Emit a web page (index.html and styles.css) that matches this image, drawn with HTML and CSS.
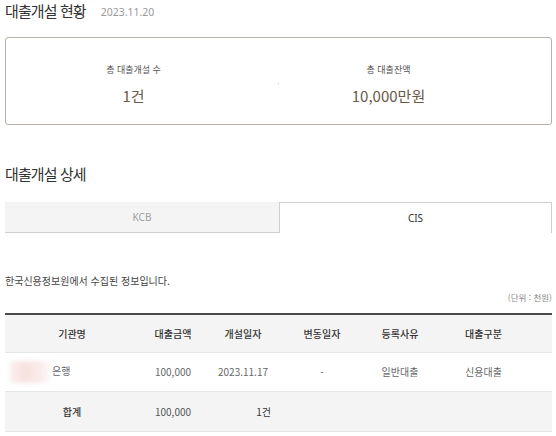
FILE: index.html
```html
<!DOCTYPE html>
<html lang="ko">
<head>
<meta charset="utf-8">
<link rel="stylesheet" href="styles.css">
</head>
<body>
<div class="page">
  <div class="head">
    <h2 class="title">대출개설 현황</h2>
    <span class="date">2023.11.20</span>
  </div>
  <div class="summary">
    <div class="sum-item">
      <div class="sum-label">총 대출개설 수</div>
      <div class="sum-value">1건</div>
    </div>
    <div class="sum-item">
      <div class="sum-label">총 대출잔액</div>
      <div class="sum-value">10,000만원</div>
    </div>
  </div>

  <h2 class="title sub">대출개설 상세</h2>
  <div class="tabs">
    <div class="tab">KCB</div>
    <div class="tab active">CIS</div>
  </div>

  <p class="notice">한국신용정보원에서 수집된 정보입니다.</p>
  <p class="unit">(단위 : 천원)</p>

  <table class="grid">
    <colgroup>
      <col class="c1"><col class="c2"><col class="c3"><col class="c4"><col class="c5"><col class="c6">
    </colgroup>
    <thead>
      <tr><th>기관명</th><th>대출금액</th><th>개설일자</th><th>변동일자</th><th>등록사유</th><th class="last">대출구분</th></tr>
    </thead>
    <tbody>
      <tr class="row">
        <td class="org"><span class="blur"></span>은행</td>
        <td>100,000</td>
        <td>2023.11.17</td>
        <td>-</td>
        <td>일반대출</td>
        <td class="last">신용대출</td>
      </tr>
      <tr class="total">
        <td class="strong">합계</td>
        <td>100,000</td>
        <td class="right">1건</td>
        <td></td>
        <td></td>
        <td class="last"></td>
      </tr>
    </tbody>
  </table>
</div>
</body>
</html>
```
FILE: styles.css
```css
* { box-sizing: border-box; }
html, body { margin: 0; padding: 0; background: #fff; }
body {
  font-family: "Noto Sans CJK KR", "Noto Sans", sans-serif;
  color: #333;
}
.page { padding: 0 4px 0 5px; }

.head {
  display: flex;
  align-items: center;
  gap: 15px;
  height: 22px;
}
.title {
  margin: 0;
  font-size: 15px;
  font-weight: 400;
  line-height: 22px;
  letter-spacing: -0.9px;
  color: #333;
}
.date {
  font-family: "Noto Sans", sans-serif;
  font-size: 10.5px;
  color: #999;
  padding-top: 1px;
}

.summary {
  position: relative;
  margin-top: 15px;
  height: 88px;
  border: 1px solid #b7b1a8;
  border-radius: 3px;
  display: grid;
  grid-template-columns: 1fr 1fr;
  padding: 25px 35px 0 0;
  align-content: start;
}
.summary::after {
  content: "";
  position: absolute;
  left: 272px;
  top: 45px;
  width: 1px;
  height: 1px;
  background: #c8c8c8;
}
.sum-item { text-align: center; }
.sum-label {
  font-size: 9px;
  line-height: 14px;
  color: #555;
}
.sum-value {
  margin-top: 10px;
  font-size: 15px;
  line-height: 18px;
  font-weight: 400;
  color: #6a5a49;
}

.sub { margin-top: 38px; }

.tabs {
  margin-top: 17px;
  display: grid;
  grid-template-columns: 274px 1fr;
  height: 31px;
}
.tab {
  display: flex;
  align-items: center;
  justify-content: center;
  font-family: "Noto Sans", sans-serif;
  font-size: 10px;
  color: #a0a0a0;
  background: #f4f4f4;
  border-bottom: 1px solid #cfcfcf;
}
.tab.active {
  background: #fff;
  color: #333;
  border: 1px solid #cfcfcf;
  border-bottom: none;
}

.notice {
  margin: 41px 0 0;
  font-size: 10px;
  line-height: 14px;
  color: #444;
}
.unit {
  margin: 2px 0 0;
  text-align: right;
  font-size: 8.5px;
  line-height: 14px;
  color: #888;
}

.grid {
  margin-top: 9px;
  width: 100%;
  border-collapse: collapse;
  table-layout: fixed;
  font-size: 10px;
}
.c1 { width: 134px; }
.c2 { width: 68px; }
.c3 { width: 72px; }
.c4 { width: 86px; }
.c5 { width: 70px; }
.grid thead tr { border-top: 2px solid #4a4a4a; }
.grid th {
  height: 38px;
  background: #f4f4f4;
  font-weight: 500;
  color: #333;
  text-align: center;
  padding: 0;
}
.grid td {
  height: 39px;
  text-align: center;
  color: #666;
  padding: 0;
}
.grid .last { padding-right: 20px; }
.row td { border-top: 1px solid #e6e6e6; border-bottom: 1px solid #e6e6e6; background: #fff; }
.total td { height: 40px; background: #f4f4f4; color: #555; border-bottom: 1px solid #e6e6e6; }
.total .strong { font-weight: 500; color: #333; }
.total .right { text-align: right; padding-right: 8px; color: #333; }
.grid td.org {
  text-align: left;
  padding-left: 5px;
}
.blur {
  display: inline-block;
  vertical-align: middle;
  width: 40px;
  height: 22px;
  margin-right: 2px;
  background: linear-gradient(90deg, #fbeeee 0%, #f6e2df 40%, #f8ecea 75%, #fdf8f7 100%);
  filter: blur(2px);
}
```
